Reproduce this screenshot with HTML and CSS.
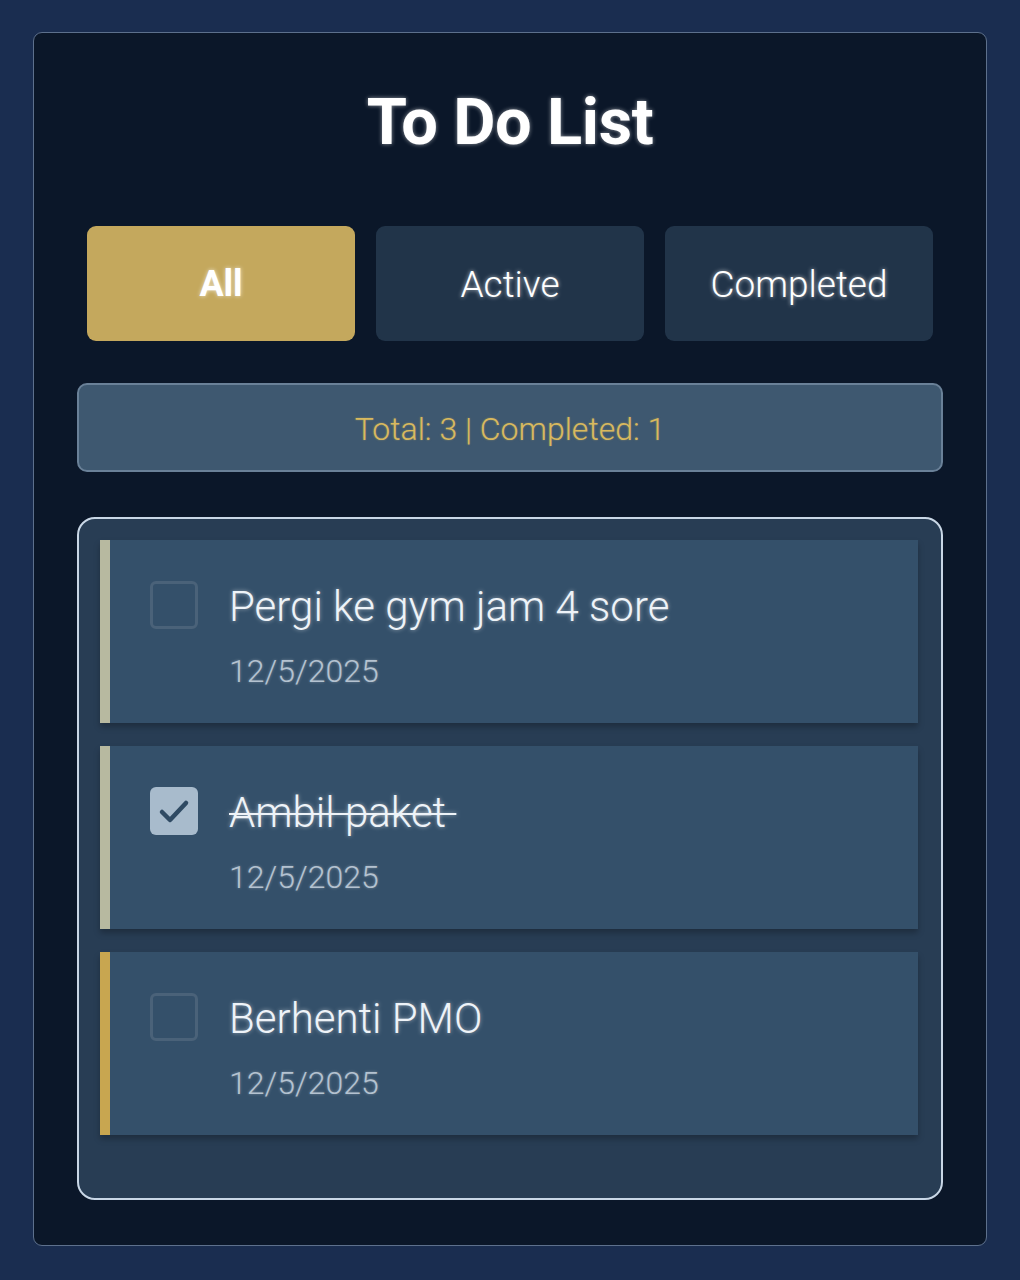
FILE: index.html
```html
<!DOCTYPE html>
<html>
<head>
<meta charset="utf-8">
<link rel="stylesheet" href="styles.css">
</head>
<body>
<div class="app">
  <h1 class="title">To Do List</h1>
  <div class="filters">
    <button class="filter active-filter">All</button>
    <button class="filter">Active</button>
    <button class="filter">Completed</button>
  </div>
  <div class="stats">Total: 3 | Completed: 1</div>
  <div class="list">
    <div class="item">
      <span class="check"></span>
      <div class="body">
        <div class="text">Pergi ke gym jam 4 sore</div>
        <div class="date">12/5/2025</div>
      </div>
    </div>
    <div class="item">
      <span class="check checked">
        <svg viewBox="0 0 48 48" width="48" height="48"><path d="M12 25 L20 33 L36 16" fill="none" stroke="#2f4a63" stroke-width="4.5" stroke-linecap="round" stroke-linejoin="round"/></svg>
      </span>
      <div class="body">
        <div class="text done">Ambil paket&nbsp;</div>
        <div class="date">12/5/2025</div>
      </div>
    </div>
    <div class="item gold">
      <span class="check"></span>
      <div class="body">
        <div class="text">Berhenti PMO</div>
        <div class="date">12/5/2025</div>
      </div>
    </div>
  </div>
</div>
</body>
</html>
```

FILE: styles.css
```css
html, body {
  margin: 0;
  padding: 0;
}
body {
  background: #1a2d50;
  font-family: Roboto, "Noto Sans", "Liberation Sans", sans-serif;
  padding: 32px 33px 34px;
}
.app {
  background: #0b1729;
  border: 1px solid #5d708c;
  border-radius: 9px;
  padding: 48px 43px 45px;
  box-sizing: border-box;
  height: 1214px;
}
.title {
  margin: 0;
  text-align: center;
  color: #ffffff;
  font-size: 65px;
  font-weight: 700;
  line-height: 82px;
  letter-spacing: -0.4px;
  text-shadow: 0 0 4px rgba(255,255,255,0.55);
}
.filters {
  display: flex;
  gap: 21px;
  padding: 0 10px;
  margin-top: 63px;
}
.filter {
  flex: 1;
  height: 115px;
  border: none;
  border-radius: 9px;
  background: #213449;
  color: #ffffff;
  font-family: inherit;
  font-size: 37px;
  font-weight: 300;
  padding-top: 2px;
  text-shadow: 0 0 4px rgba(255,255,255,0.7);
}
.active-filter {
  background: #c4a85d;
  font-weight: 700;
  font-size: 36px;
}
.stats {
  margin-top: 42px;
  height: 89px;
  box-sizing: border-box;
  background: #3e5870;
  border: 2px solid #6a8198;
  border-radius: 10px;
  display: flex;
  align-items: center;
  justify-content: center;
  color: #d8b95e;
  font-size: 32px;
  font-weight: 300;
  padding-top: 3px;
  text-shadow: 0 0 2px rgba(216,185,94,0.5);
}
.list {
  margin-top: 45px;
  height: 683px;
  box-sizing: border-box;
  background: #283d54;
  border: 2px solid #c9d7e6;
  border-radius: 18px;
  padding: 21px 23px 21px 21px;
  display: flex;
  flex-direction: column;
  gap: 23px;
}
.item {
  height: 183px;
  box-sizing: border-box;
  background: #34506a;
  border-left: 10px solid #b7b9a0;
  box-shadow: 0 4px 6px rgba(0,0,0,0.25);
  display: flex;
  align-items: flex-start;
  padding: 41px 0 0 40px;
  gap: 31px;
}
.item.gold {
  border-left-color: #c8a650;
}
.check {
  width: 48px;
  height: 48px;
  box-sizing: border-box;
  border: 3px solid #4a6279;
  border-radius: 6px;
  flex: none;
  display: block;
}
.check.checked {
  border: none;
  background: #a8bbcc;
}
.check.checked svg {
  display: block;
}
.body {
  display: flex;
  flex-direction: column;
}
.text {
  color: #eef3f8;
  font-size: 42px;
  font-weight: 300;
  line-height: 50px;
  margin-top: 1px;
  text-shadow: 0 0 4px rgba(255,255,255,0.5);
}
.text.done {
  text-decoration: line-through;
  text-decoration-thickness: 2px;
}
.date {
  color: #b4c2d0;
  font-size: 32px;
  font-weight: 300;
  line-height: 40px;
  margin-top: 19px;
  text-shadow: 0 0 3px rgba(255,255,255,0.35);
}
```
